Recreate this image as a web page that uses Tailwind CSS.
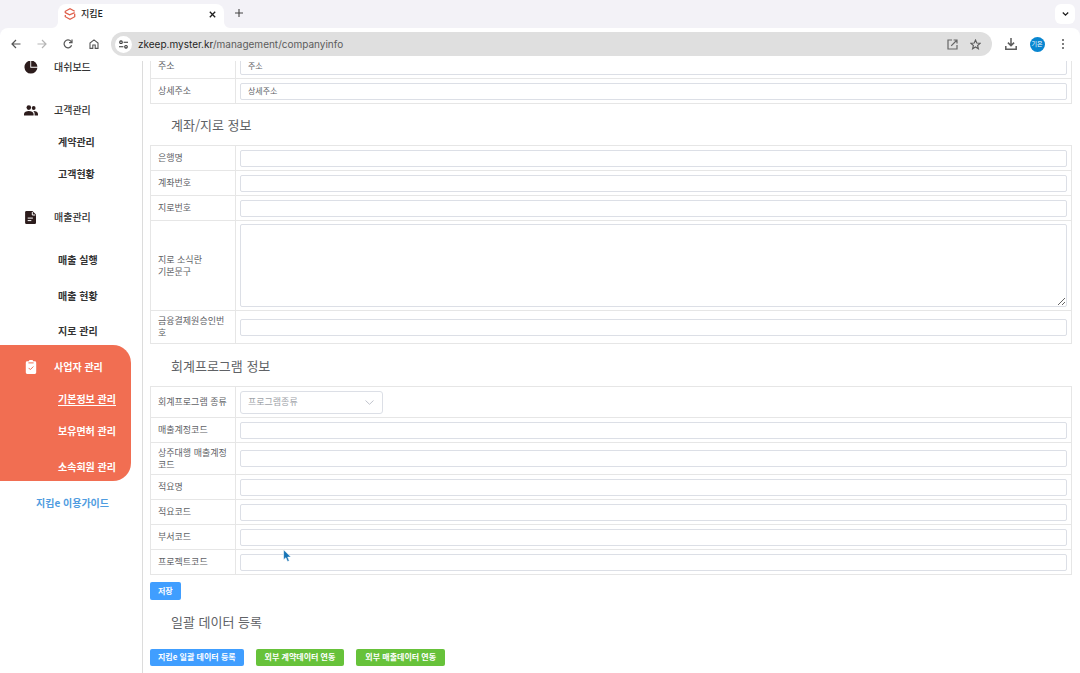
<!DOCTYPE html>
<html lang="ko">
<head>
<meta charset="utf-8">
<title>지킴E</title>
<script src="https://cdn.jsdelivr.net/npm/@tailwindcss/browser@4"></script>
</head>
<body class="h-screen overflow-hidden bg-white font-['Noto_Sans_CJK_KR',sans-serif] text-[#606266]">

<header class="relative z-10 bg-[#f3f2f7]">
  <div class="flex h-7 items-end pl-[58px] pr-[5px]">
    <div class="relative flex h-6 w-[166px] items-center rounded-t-lg bg-white pb-1 pl-[6px] pr-[6px] text-[#1f1f1f]">
      <svg class="absolute bottom-0 -left-[6px] size-[6px]" viewBox="0 0 6 6" aria-hidden="true"><path d="M6 0v6H0A6 6 0 0 0 6 0Z" fill="#fff"/></svg>
      <svg class="absolute bottom-0 -right-[6px] size-[6px]" viewBox="0 0 6 6" aria-hidden="true"><path d="M0 0v6h6A6 6 0 0 1 0 0Z" fill="#fff"/></svg>
      <svg class="size-3" viewBox="0 0 12 12" fill="none" stroke="#e0604c" stroke-width="1.3" aria-hidden="true"><path d="M1.300 5V3.300L6 .8l4.700 2.500M10.700 5.800v2.900L6 11.200 1.300 8.700V7"/><path d="M1.300 4.600 5.600 6.900l5.100-2.300"/></svg>
      <span class="ml-[5px] text-[9px] font-medium">지킴E</span>
      <button class="ml-auto flex size-3 items-center justify-center" aria-label="탭 닫기"><svg class="size-[7px]" viewBox="0 0 7 7" stroke="#1f1f1f" stroke-width="1.3"><path d="m.8.8 5.4 5.4M6.2.8.8 6.2"/></svg></button>
    </div>
    <button class="ml-2 flex h-[30px] w-[13px] items-center justify-center" aria-label="새 탭"><svg class="size-2" viewBox="0 0 8 8" stroke="#444" stroke-width="1.1"><path d="M4 0v8M0 4h8"/></svg></button>
    <button class="mb-1 ml-auto flex size-5 items-center justify-center rounded-md bg-white" aria-label="탭 검색"><svg class="h-1 w-[7px]" viewBox="0 0 7 4" fill="none" stroke="#1f1f1f" stroke-width="1.3"><path d="m.8.5 2.7 2.600L6.200.5"/></svg></button>
  </div>
  <div class="flex h-[33px] items-center rounded-t-lg bg-white pb-px pl-[3px] pr-1">
    <button class="flex w-[26px] justify-center" aria-label="뒤로"><svg class="size-[10px]" viewBox="0 0 10 10" fill="none" stroke="#555" stroke-width="1.2"><path d="M9.500 5H1.200M5 1 1 5l4 4"/></svg></button>
    <button class="flex w-[26px] justify-center" aria-label="앞으로"><svg class="size-[10px]" viewBox="0 0 10 10" fill="none" stroke="#b5b5b5" stroke-width="1.2"><path d="M.500 5h8.300M5 1l4 4-4 4"/></svg></button>
    <button class="flex w-[26px] justify-center" aria-label="새로고침"><svg class="size-[10px]" viewBox="0 0 10 10" fill="none" stroke="#555" stroke-width="1.2"><path d="M8.600 6.300A3.900 3.900 0 1 1 8 2.400l.7.9"/><path d="M9 .6v3H6"/></svg></button>
    <button class="flex w-[26px] justify-center" aria-label="홈"><svg class="size-[10px]" viewBox="0 0 10 10" fill="none" stroke="#555" stroke-width="1.1"><path d="M1 9.400V4L5 .9 9 4v5.400H6.200V6H3.800v3.400Z"/></svg></button>
    <div class="ml-1 mr-[6px] flex h-6 flex-1 items-center rounded-full bg-[#dfdfdf] pl-1 pr-[5px]">
      <button class="flex size-[17px] shrink-0 items-center justify-center rounded-full bg-white" aria-label="사이트 정보"><svg class="size-[9px]" viewBox="0 0 9 9" fill="none" stroke="#333" stroke-width="1.1"><circle cx="2" cy="2.200" r="1.300"/><path d="M4.600 2.200H9M0 6.800h4.400"/><circle cx="7" cy="6.800" r="1.300"/></svg></button>
      <div class="ml-[6px] flex-1 font-[Inter,sans-serif] text-[10px] text-[#5c5c5c]"><span class="text-[#1f1f1f]">zkeep.myster.kr</span>/management/companyinfo</div>
      <button class="flex w-[23px] justify-center" aria-label="열기"><svg class="size-[11px]" viewBox="0 0 11 11" fill="none" stroke="#666" stroke-width="1.2"><path d="M5 1H1v9h9V6M6.600 1H10v3.400M10 1 4.200 6.800"/></svg></button>
      <button class="flex w-[23px] justify-center" aria-label="북마크"><svg class="size-[11px]" viewBox="0 0 11 11" fill="none" stroke="#5c5c5c" stroke-width="1.1"><path d="m5.500 1 1.300 3 3.300.3-2.500 2.200.8 3.300-2.900-1.800-2.900 1.800.8-3.300L.9 4.300 4.200 4Z"/></svg></button>
    </div>
    <button class="flex w-[26px] justify-center" aria-label="다운로드"><svg class="size-3" viewBox="0 0 12 12" fill="none" stroke="#5c5c5c" stroke-width="1.5"><path d="M6 0v7.400M2.900 4.600 6 7.600l3.100-3M.8 8v3.200h10.400V8"/></svg></button>
    <button class="flex w-[26px] justify-center" aria-label="프로필"><span class="flex size-[15px] items-center justify-center rounded-full bg-[#0986d0] text-[6px] leading-none text-white">기은</span></button>
    <button class="flex w-[26px] justify-center" aria-label="메뉴"><svg class="h-[10px] w-1" viewBox="0 0 4 10" fill="#555"><circle cx="2" cy="1" r="1"/><circle cx="2" cy="5" r="1"/><circle cx="2" cy="9" r="1"/></svg></button>
  </div>
</header>

<div class="-mt-2 flex h-[calc(100vh-53px)]">
  <nav class="w-[142px] shrink-0 pt-1 text-[10px] font-bold leading-5 text-[#333]">
    <a href="#" class="flex h-5 items-center pl-6 font-medium"><svg class="mr-4 size-[14px]" viewBox="0 0 14 14" fill="#2c1c1c" aria-hidden="true"><path d="M6.300.6v7.100h7.100A6.500 6.500 0 1 1 6.300.6Z"/><path d="M7.200.6a6.500 6.500 0 0 1 6.200 6.200H7.200Z"/></svg>대쉬보드</a>
    <a href="#" class="mt-[23px] flex h-5 items-center pl-6 font-medium"><svg class="mr-4 h-[11px] w-[14px]" viewBox="0 0 14 11" fill="#2c1c1c" aria-hidden="true"><circle cx="4.800" cy="2.600" r="2.300"/><path d="M0 10.600V9c0-2 2.400-3.100 4.800-3.100S9.600 7 9.600 9v1.600Z"/><circle cx="9.700" cy="3" r="1.900"/><path d="M9.200 6c2.600-.2 4.800 1 4.800 3v1.600h-3.400V9c0-1.300-.5-2.200-1.400-3Z"/></svg>고객관리</a>
    <a href="#" class="mt-3 block pl-[58px]">계약관리</a>
    <a href="#" class="mt-3 block pl-[58px]">고객현황</a>
    <a href="#" class="mt-[23px] flex h-5 items-center pl-6 font-medium"><svg class="mr-4 h-[13px] w-[14px]" viewBox="0 0 14 13" aria-hidden="true"><path d="M2.400 0h6L12 3.600V11.700A1.300 1.300 0 0 1 10.700 13H2.400A1.300 1.300 0 0 1 1.100 11.700V1.300A1.300 1.300 0 0 1 2.400 0Z" fill="#2c1c1c"/><path d="M8.300 1V4h3M3.700 7.100h5.200M3.700 9.600h3.600" stroke="#fff" fill="none"/></svg>매출관리</a>
    <a href="#" class="mt-[23px] block pl-[58px]">매출 실행</a>
    <a href="#" class="mt-4 block pl-[58px]">매출 현황</a>
    <a href="#" class="mt-[15px] block pl-[58px]">지로 관리</a>
    <div class="mr-[11px] mt-1 rounded-r-[18px] bg-[#f16e52] pb-1 pt-3 text-white">
      <a href="#" class="flex h-5 items-center pl-6"><svg class="mr-4 size-[14px]" viewBox="0 0 14 14" aria-hidden="true"><path d="M3.200 1.300h1.600a2.200 1.500 0 0 1 4.400 0h1.600a1.400 1.400 0 0 1 1.400 1.400v9.900A1.400 1.400 0 0 1 10.800 14H3.200a1.400 1.400 0 0 1-1.400-1.400V2.700a1.400 1.400 0 0 1 1.400-1.400Z" fill="#fff"/><path d="M4.400 2.900h5.200M4.600 7.900l1.700 1.700 3.100-3.100" stroke="#f16e52" fill="none"/></svg>사업자 관리</a>
      <a href="#" class="mt-3 block pl-[58px] underline underline-offset-2">기본정보 관리</a>
      <a href="#" class="mt-3 block pl-[58px]">보유면허 관리</a>
      <a href="#" class="mt-4 block pl-[58px]">소속회원 관리</a>
    </div>
    <a href="#" class="mt-3 block pl-9 text-[#4f9ce0]">지킴e 이용가이드</a>
  </nav>

  <main class="min-w-0 flex-1 overflow-hidden border-l border-[#dcdcdc] pl-[7px] pr-2 text-[9px] leading-3">
    <table class="w-full table-fixed border-collapse border border-[#dedede] [&_input]:block [&_input]:h-[17px] [&_input]:w-full [&_input]:rounded-xs [&_input]:border [&_input]:border-[#dcdfe6] [&_input]:px-[7px] [&_input]:pb-[2px] [&_input]:text-[8px] [&_td]:border [&_td]:border-[#e6e6e6] [&_td]:px-1 [&_th]:w-[85px] [&_th]:border [&_th]:border-[#e6e6e6] [&_th]:pl-[7px] [&_th]:pr-1 [&_th]:text-left [&_th]:font-normal">
      <tr class="h-[25px]"><th><label for="addr">주소</label></th><td><input id="addr" value="주소"></td></tr>
      <tr class="h-[25px]"><th><label for="addr2">상세주소</label></th><td><input id="addr2" value="상세주소"></td></tr>
    </table>

    <h2 class="flex h-[41px] items-center pl-[21px] pt-px text-[13px]">계좌/지로 정보</h2>
    <table class="w-full table-fixed border-collapse border border-[#dedede] [&_input]:block [&_input]:h-[17px] [&_input]:w-full [&_input]:rounded-xs [&_input]:border [&_input]:border-[#dcdfe6] [&_input]:px-[7px] [&_input]:text-[8px] [&_td]:border [&_td]:border-[#e6e6e6] [&_td]:px-1 [&_th]:w-[85px] [&_th]:border [&_th]:border-[#e6e6e6] [&_th]:pl-[7px] [&_th]:pr-1 [&_th]:text-left [&_th]:font-normal">
      <tr class="h-[25px]"><th><label for="bank">은행명</label></th><td><input id="bank"></td></tr>
      <tr class="h-[25px]"><th><label for="acct">계좌번호</label></th><td><input id="acct"></td></tr>
      <tr class="h-[25px]"><th><label for="giro">지로번호</label></th><td><input id="giro"></td></tr>
      <tr class="h-[90px]"><th><label for="news">지로 소식란<br>기본문구</label></th><td><textarea id="news" class="block h-[83px] w-full resize-y rounded-xs border border-[#dcdfe6] px-[7px]"></textarea></td></tr>
      <tr class="h-[33px]"><th><label for="appr">금융결제원승인번호</label></th><td><input id="appr"></td></tr>
    </table>

    <h2 class="flex h-[42px] items-center pl-[21px] pt-px text-[13px]">회계프로그램 정보</h2>
    <table class="w-full table-fixed border-collapse border border-[#dedede] [&_input]:block [&_input]:h-[17px] [&_input]:w-full [&_input]:rounded-xs [&_input]:border [&_input]:border-[#dcdfe6] [&_input]:px-[7px] [&_input]:text-[8px] [&_td]:border [&_td]:border-[#e6e6e6] [&_td]:px-1 [&_th]:w-[85px] [&_th]:border [&_th]:border-[#e6e6e6] [&_th]:pl-[7px] [&_th]:pr-1 [&_th]:text-left [&_th]:font-normal">
      <tr class="h-[31px]"><th><label for="prog">회계프로그램 종류</label></th><td>
        <div class="relative w-[143px]">
          <select id="prog" class="block h-[23px] w-full appearance-none rounded-[3px] border border-[#dcdfe6] bg-white px-[7px] text-[9px] text-[#a0a3a9]"><option>프로그램종류</option></select>
          <svg class="pointer-events-none absolute right-[9px] top-[9px] h-[5px] w-[9px]" viewBox="0 0 9 5" fill="none" stroke="#c0c4cc" aria-hidden="true"><path d="m.5.5 4 3.800 4-3.800"/></svg>
        </div></td></tr>
      <tr class="h-[25px]"><th><label for="sales">매출계정코드</label></th><td><input id="sales"></td></tr>
      <tr class="h-8"><th><label for="agent">상주대행 매출계정코드</label></th><td><input id="agent"></td></tr>
      <tr class="h-[25px]"><th><label for="memo">적요명</label></th><td><input id="memo"></td></tr>
      <tr class="h-[25px]"><th><label for="memocode">적요코드</label></th><td><input id="memocode"></td></tr>
      <tr class="h-[25px]"><th><label for="dept">부서코드</label></th><td><input id="dept"></td></tr>
      <tr class="h-[25px]"><th><label for="proj">프로젝트코드</label></th><td><input id="proj"></td></tr>
    </table>

    <button class="mt-[7px] block h-[18px] rounded-xs bg-[#409eff] px-2 pb-px text-[8px] font-bold text-white">저장</button>
    <h2 class="flex h-[43px] items-center pl-[21px] text-[13px]">일괄 데이터 등록</h2>
    <div class="mt-[6px] flex gap-3 text-[8px] font-bold text-white">
      <button class="h-[17px] rounded-xs bg-[#409eff] px-2 pb-px">지킴e 일괄 데이터 등록</button>
      <button class="h-[17px] rounded-xs bg-[#67c23a] px-[9px] pb-px">외부 계약데이터 연동</button>
      <button class="h-[17px] rounded-xs bg-[#67c23a] px-[9px] pb-px">외부 매출데이터 연동</button>
    </div>
  </main>
</div>

<svg class="absolute left-[283px] top-[549px] z-20 h-[14px] w-[9px]" viewBox="0 0 9 14" aria-hidden="true"><path d="M.6.8v10l2.300-2.100 1.600 3.900 1.800-.8-1.600-3.700h3.300Z" fill="#1573b5" stroke="#fff" stroke-width=".6"/></svg>
</body>
</html>
